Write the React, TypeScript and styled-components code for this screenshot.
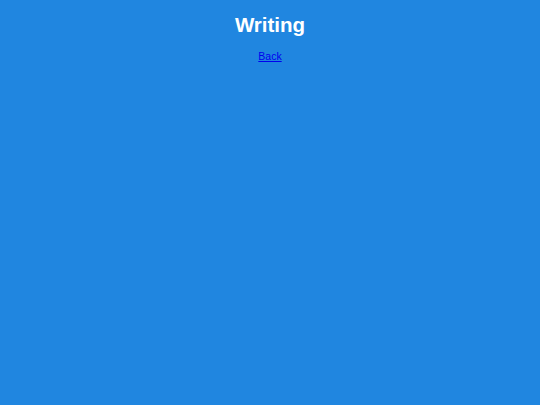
import React from "react";
import styled, { createGlobalStyle } from "styled-components";

const Global = createGlobalStyle`
  html, body { margin: 0; padding: 0; background: #2086e0; }
  body { font-family: "Liberation Sans", Arial, sans-serif; }
`;

const Page = styled.div`
  min-height: 405px;
  background: #2086e0;
  display: flex;
  flex-direction: column;
  align-items: center;
  padding-top: 12px;
  box-sizing: border-box;
`;

const Title = styled.h1`
  margin: 0;
  font-size: 20.5px;
  line-height: 26px;
  font-weight: bold;
  color: #ffffff;
`;

const BackLink = styled.a`
  margin-top: 11px;
  font-size: 10.5px;
  line-height: 14px;
  color: #0000ee;
  text-decoration: underline;
`;

export default function App() {
  return (
    <>
      <Global />
      <Page>
        <Title>Writing</Title>
        <BackLink href="#">Back</BackLink>
      </Page>
    </>
  );
}
